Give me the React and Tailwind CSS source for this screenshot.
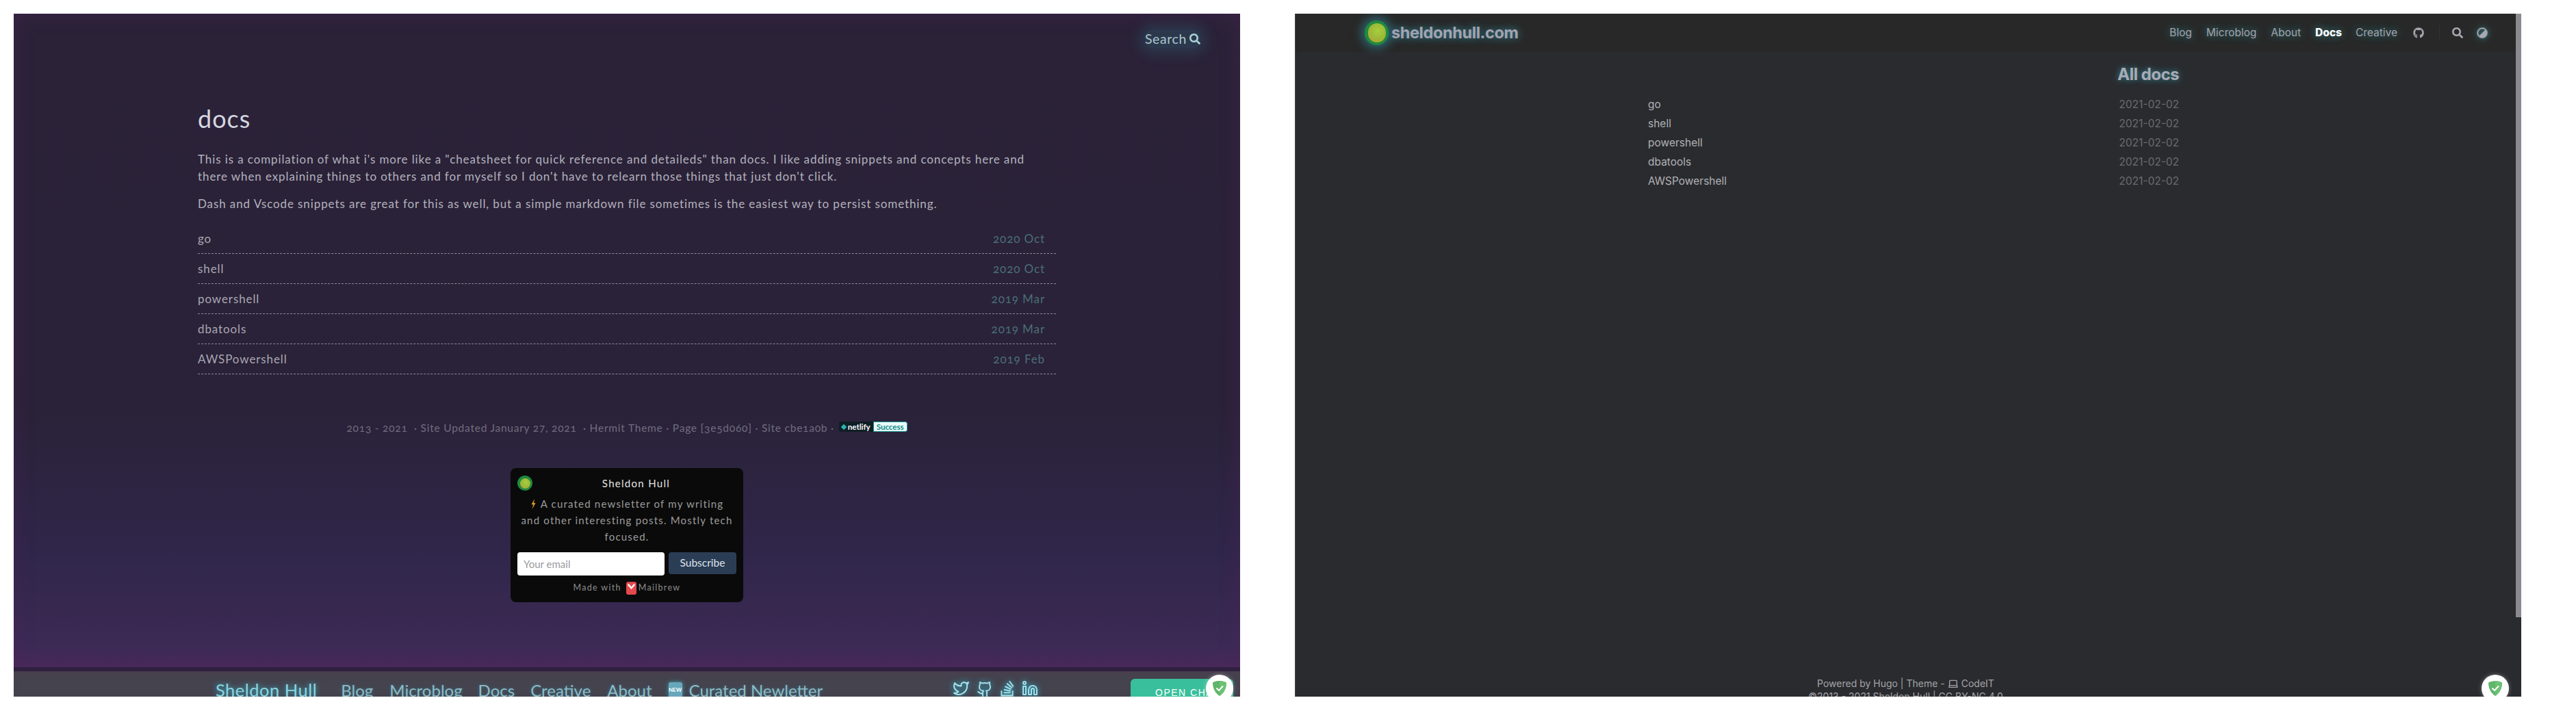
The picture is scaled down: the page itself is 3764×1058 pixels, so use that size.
import React from 'react';
import { Twitter, Github, Linkedin, Laptop } from 'lucide-react';
import { FaSearch, FaGithub, FaAdjust, FaStackOverflow } from 'react-icons/fa';

function Avatar({ outer, inner }) {
  return (
    <span className={`${outer} shrink-0 rounded-full bg-[#1f8a3f] flex items-center justify-center`}>
      <span className={`${inner} rounded-full bg-[radial-gradient(circle_at_55%_40%,#a6cf3c_0%,#9cb93a_50%,#c79a2a_100%)]`} />
    </span>
  );
}

function Shield() {
  return (
    <svg viewBox="0 0 20 22" className="w-[20px] h-[22px]">
      <path d="M10 0C6.5 0 3 1 0 2.6 0 11 3.5 18 10 22 16.5 18 20 11 20 2.6 17 1 13.5 0 10 0Z" fill="#5fb56c" />
      <path d="M10 0c3.500 0 7 1 10 2.600 0 8.400-3.500 15.400-10 19.400Z" fill="#6cc174" />
      <path d="M5.500 10.500 9 14l6-6.500" fill="none" stroke="#fff" strokeWidth="2" />
    </svg>
  );
}

const docs = [
  ['go', '2020 Oct'],
  ['shell', '2020 Oct'],
  ['powershell', '2019 Mar'],
  ['dbatools', '2019 Mar'],
  ['AWSPowershell', '2019 Feb'],
];

function LeftPanel() {
  return (
    <section className="relative w-[1792px] h-[998px] shrink-0 overflow-hidden flex flex-col font-['Lato',sans-serif]">
      <div className="relative h-[961px] shrink-0 bg-[linear-gradient(180deg,#2b2238_0%,#2a2238_60%,#30264a_82%,#3c2a55_96%,#4a2a5a_100%)] shadow-[inset_0_0_28px_rgba(80,35,90,0.45)]">
        <div className="flex justify-end pt-[24px] pr-[58px] h-[131px]">
          <div className="h-[26px] flex items-center gap-[4px] text-[19.500px] tracking-[0.6px] text-[#a9c6cc] bg-[rgba(48,110,125,0.3)] shadow-[0_0_18px_8px_rgba(48,110,125,0.3)] rounded-[10px]">
            Search <FaSearch className="w-[16px] h-[16px] text-[#a8d2d8]" />
          </div>
        </div>
        <article className="w-[1254px] mx-auto">
          <h1 className="text-[36px] leading-[44px] tracking-[1px] text-[#d5d6e0] font-normal">docs</h1>
          <p className="mt-[25px] text-[17px] leading-[25px] tracking-[0.9px] text-[#b3b1bd] whitespace-nowrap">
            This is a compilation of what i's more like a "cheatsheet for quick reference and detaileds" than docs. I like adding snippets and concepts here and
            <br />
            there when explaining things to others and for myself so I don't have to relearn those things that just don't click.
          </p>
          <p className="mt-[15px] text-[17px] leading-[25px] tracking-[0.9px] text-[#b3b1bd]">
            Dash and Vscode snippets are great for this as well, but a simple markdown file sometimes is the easiest way to persist something.
          </p>
          <ul className="mt-[17px]">
            {docs.map(([n, d]) => (
              <li key={n} className="h-[44px] flex items-center justify-between pr-[16px] border-b border-dashed border-[#8c8a98] text-[17px] tracking-[0.9px]">
                <span className="text-[#a9a7b3]">{n}</span>
                <span className="text-[#4a6e7a] oldstyle-nums">{d}</span>
              </li>
            ))}
          </ul>
        </article>
        <div className="mt-[67px] h-[24px] flex items-center justify-center gap-[7px] text-[15.500px] tracking-[0.77px] text-[#716d7e] oldstyle-nums">
          <span className="whitespace-pre">2013 - 2021  · Site Updated January 27, 2021  · Hermit Theme · Page [3e5d060] · Site cbe1a0b ·</span>
          <span className="flex h-[15px] -mt-[5px] rounded-[3px] bg-[#0e1e25] text-[11.500px] leading-[15px] overflow-hidden tracking-normal items-stretch">
            <span className="flex items-center gap-[3px] px-[4px] font-bold text-white">
              <span className="w-[6px] h-[6px] rotate-45 bg-[#2bb3b3]" />netlify
            </span>
            <span className="px-[4px] bg-[#e9faf8] text-[#0e8a8a] font-bold border border-[#1f9a9a] rounded-r-[3px] leading-[13px]">Success</span>
          </span>
        </div>
        <div className="mt-[46px] mx-auto w-[340px] h-[196px] rounded-[8px] bg-[#0a0a0a] pt-[11px] px-[10px] text-center tracking-[1.2px]">
          <div className="flex items-center h-[22px]">
            <Avatar outer="w-[22px] h-[22px]" inner="w-[15px] h-[15px]" />
            <span className="flex-1 pl-[5px] text-[15px] text-[#e4e4e4] tracking-[1.300px]">Sheldon Hull</span>
          </div>
          <p className="mt-[7px] text-[15px] leading-[24px] text-[#9b9b9b] whitespace-nowrap">
            <svg viewBox="0 0 10 20" className="inline-block w-[9px] h-[15px] mr-[6px] -mt-[3px]">
              <path d="M7 0 1 11h3.500L2.500 20 9 8H5.500Z" fill="#d99a2b" />
            </svg>
            A curated newsletter of my writing
            <br />
            and other interesting posts. Mostly tech
            <br />
            focused.
          </p>
          <div className="mt-[11px] flex items-start gap-[6px]">
            <input
              readOnly
              placeholder="Your email"
              className="w-[215px] h-[34px] rounded-[4px] bg-white px-[9px] text-[15px] tracking-[0px] placeholder:text-[#9a9aa0] outline-none font-['Lato',sans-serif]"
            />
            <button className="w-[99px] h-[32px] rounded-[4px] bg-[#2b3d55] text-[#dfe3ea] text-[15.500px] tracking-[0px]">Subscribe</button>
          </div>
          <div className="mt-[9px] flex items-center justify-center gap-[7px] text-[12.500px] text-[#8a8a8a] tracking-[1.300px]">
            <span>Made with</span>
            <span className="flex items-center gap-[3px]">
              <svg viewBox="0 0 16 20" className="w-[15px] h-[19px]">
                <rect width="16" height="20" rx="3" fill="#e5484d" />
                <path d="M3 4l5 6 5-6" fill="none" stroke="#fff" strokeWidth="2.500" />
              </svg>
              Mailbrew
            </span>
          </div>
        </div>
      </div>
      <div className="h-[6px] shrink-0 bg-[#2f2040] -mt-[6px] relative" />
      <nav className="h-[37px] shrink-0 bg-[#44434e] shadow-[inset_0_4px_10px_rgba(90,55,80,0.35)] flex items-start relative text-[#8cbcc8] text-[24px] leading-[30px] pt-[13px] pl-[295px] whitespace-nowrap [text-shadow:0_0_5px_rgba(60,180,200,0.45)]">
        <span className="text-[25.500px] leading-[30px] tracking-[0.5px] text-[#8ad6e0] [text-shadow:0_0_9px_rgba(60,200,220,0.95)] -mt-[1px]">Sheldon Hull</span>
        <span className="ml-[35px]">Blog</span>
        <span className="ml-[24px]">Microblog</span>
        <span className="ml-[23px]">Docs</span>
        <span className="ml-[23px]">Creative</span>
        <span className="ml-[24px]">About</span>
        <span className="ml-[24px] w-[20px] h-[22px] rounded-[3px] bg-[#6aa7bb] text-[8px] leading-[22px] text-center text-white font-bold shadow-[0_0_6px_rgba(60,200,220,0.7)] mt-[3px]">NEW</span>
        <span className="ml-[10px]">Curated Newletter</span>
        <span className="ml-[190px] flex gap-[10px] text-[#a5dfe9] -mt-[1px] [filter:drop-shadow(0_0_5px_#27c6e0)]">
          <Twitter className="w-[25px] h-[25px]" />
          <Github className="w-[24px] h-[28px]" />
          <FaStackOverflow className="w-[22px] h-[26px]" />
          <Linkedin className="w-[24px] h-[26px]" />
        </span>
      </nav>
      <button className="absolute right-[10px] top-[972px] w-[150px] h-[40px] rounded-[6px] bg-[#3abf9c] text-white text-[14px] tracking-[1.500px] text-left pl-[36px] font-['Liberation_Sans',sans-serif]">
        OPEN CHAT
      </button>
      <div className="absolute right-[10px] top-[966px] w-[40px] h-[40px] rounded-full bg-white flex items-center justify-center shadow-[0_0_6px_rgba(255,255,255,0.35)]">
        <Shield />
      </div>
    </section>
  );
}

function RightPanel() {
  return (
    <section className="relative w-[1792px] h-[998px] shrink-0 overflow-hidden flex flex-col bg-[#2a2b2f] font-['Inter',sans-serif] border-l border-[#45464a]">
      <header className="h-[56px] shrink-0 bg-[#282828] flex items-center pl-[101px] pr-[49px]">
        <Avatar outer="w-[35px] h-[36px] shadow-[0_0_14px_5px_rgba(50,150,170,0.55)]" inner="w-[26px] h-[28px]" />
        <span className="ml-[4px] text-[23.500px] font-bold tracking-[-0.4px] text-[#a3a3b2] [text-shadow:0_0_12px_rgba(50,160,180,0.9)]">sheldonhull.com</span>
        <nav className="ml-auto flex items-center text-[15.500px] text-[#a3a3ae] [text-shadow:0_0_12px_rgba(50,160,170,0.8)] -mt-[1px]">
          <span>Blog</span>
          <span className="ml-[21px]">Microblog</span>
          <span className="ml-[21px]">About</span>
          <span className="ml-[21px] font-extrabold text-white">Docs</span>
          <span className="ml-[20px]">Creative</span>
          <FaGithub className="ml-[23px] w-[16px] h-[16px]" />
          <span className="ml-[22px] w-px h-[22px] bg-[#333]" />
          <FaSearch className="ml-[18px] w-[16px] h-[16px] text-[#a8a8b2]" />
          <FaAdjust className="ml-[20px] w-[16px] h-[16px] rotate-[225deg] text-[#a8a8b2] [filter:drop-shadow(0_0_5px_rgba(50,160,170,0.8))]" />
        </nav>
      </header>
      <main className="h-[226px] shrink-0 pl-[515px] pt-[19px]">
        <div className="w-[776px]">
          <h2 className="text-right text-[24px] leading-[28px] font-bold text-[#aaaab6] tracking-[-0.5px] [text-shadow:0_0_10px_rgba(50,170,180,0.8)]">All docs</h2>
          <ul className="mt-[16px] text-[15.500px] leading-[28px]">
            {['go', 'shell', 'powershell', 'dbatools', 'AWSPowershell'].map((n) => (
              <li key={n} className="flex justify-between text-[#b0b0b4]">
                <span>{n}</span>
                <span className="text-[#6a6b6f]">2021-02-02</span>
              </li>
            ))}
          </ul>
        </div>
      </main>
      <footer className="mt-[687px] shrink-0 pr-[8px] text-center text-[14px] leading-[19px] text-[#a4a4a8]">
        <div className="flex items-center justify-center gap-[4px]">
          Powered by Hugo | Theme - <Laptop className="w-[16px] h-[16px]" /> CodeIT
        </div>
        <div>©2013 - 2021 Sheldon Hull | CC BY-NC 4.0</div>
      </footer>
      <div className="absolute right-0 top-0 w-[8px] h-[882px] bg-[#8b8a91]" />
      <div className="absolute right-[18px] top-[966px] w-[40px] h-[40px] rounded-full bg-white flex items-center justify-center shadow-[0_0_6px_rgba(255,255,255,0.35)]">
        <Shield />
      </div>
    </section>
  );
}

export default function App() {
  return (
    <div className="w-[3764px] h-[1058px] overflow-hidden bg-white pt-[20px] pl-[20px] flex gap-[80px]">
      <LeftPanel />
      <RightPanel />
    </div>
  );
}
